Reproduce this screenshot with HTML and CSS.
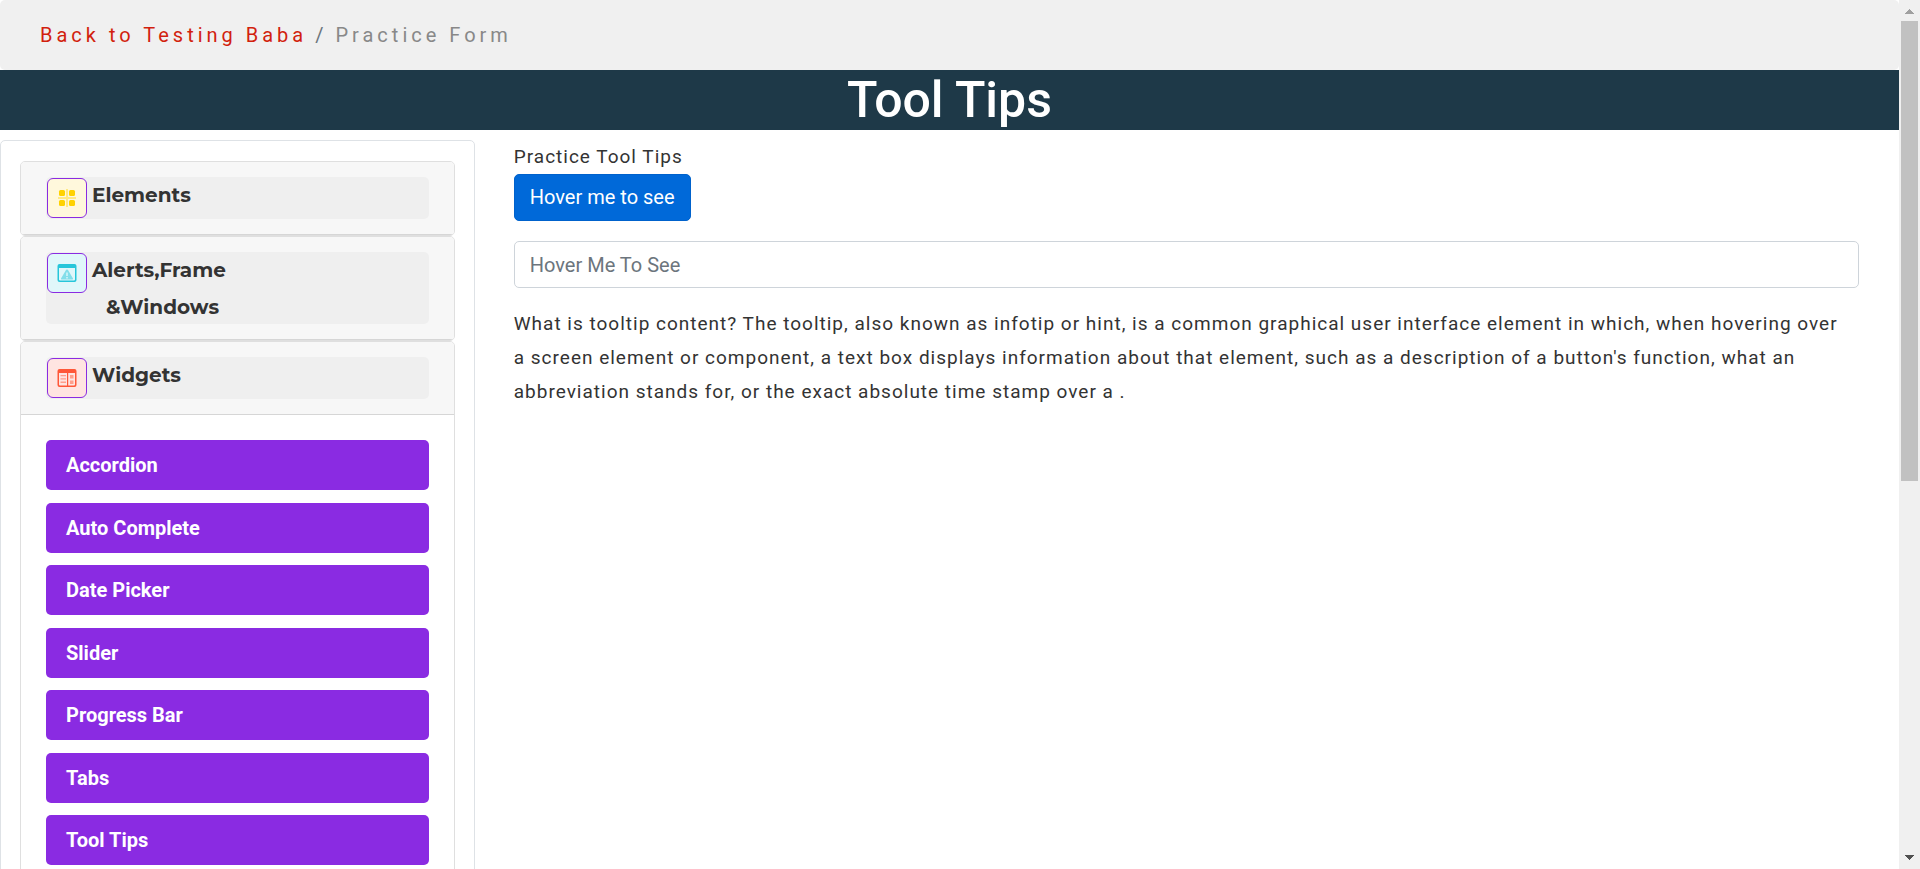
FILE: index.html
```html
<!DOCTYPE html>
<html lang="en">
<head>
<meta charset="utf-8">
<title>Tool Tips</title>
<link rel="stylesheet" href="styles.css">
</head>
<body>
<div class="window">
  <div class="page">
    <nav class="breadcrumb" aria-label="Breadcrumb">
      <a class="breadcrumb-link" href="#">Back to Testing Baba</a>
      <span class="breadcrumb-slash">/</span>
      <span class="breadcrumb-current">Practice Form</span>
    </nav>
    <h1 class="title">Tool Tips</h1>
    <div class="columns">
      <aside class="sidebar">
        <section class="card">
          <div class="card-header">
            <button class="toggle" type="button">
              <svg class="toggle-icon yellow" viewBox="0 0 38 38" aria-hidden="true">
                <path class="soft" d="M18 10h2v18h-2zM10 18h18v2H10z"/>
                <rect x="11" y="11" width="6" height="6" rx="1.5"/><rect x="21" y="11" width="6" height="6" rx="1.5"/>
                <rect x="11" y="21" width="6" height="6" rx="1.5"/><rect x="21" y="21" width="6" height="6" rx="1.5"/>
              </svg>
              <span class="toggle-text">Elements</span>
            </button>
          </div>
        </section>
        <section class="card">
          <div class="card-header">
            <button class="toggle" type="button">
              <svg class="toggle-icon cyan" viewBox="0 0 38 38" aria-hidden="true">
                <path fill-rule="evenodd" d="M11.500 10h15a2 2 0 0 1 2 2v14a2 2 0 0 1-2 2h-15a2 2 0 0 1-2-2V12a2 2 0 0 1 2-2zM11 14v11.500a1 1 0 0 0 1 1h14a1 1 0 0 0 1-1V14z"/>
                <path class="mid" fill-rule="evenodd" d="M19 15.500a1 1 0 0 1 1 .5l5 8.500q.3 1-.7 1H13.700q-1 0-.7-1l5-8.500a1 1 0 0 1 1-.5zM18.300 18.500v3.500h1.400v-3.500zM18.300 23v1.500h1.400V23z"/>
              </svg>
              <span class="toggle-text">Alerts,Frame <span class="toggle-second">&amp;Windows</span></span>
            </button>
          </div>
        </section>
        <section class="card">
          <div class="card-header">
            <button class="toggle" type="button" aria-expanded="true">
              <svg class="toggle-icon red" viewBox="0 0 38 38" aria-hidden="true">
                <path fill-rule="evenodd" d="M11.500 10h15a2 2 0 0 1 2 2v14a2 2 0 0 1-2 2h-15a2 2 0 0 1-2-2V12a2 2 0 0 1 2-2zM11 14v11.500a1 1 0 0 0 1 1h7V14zM20.200 14v12.500H26a1 1 0 0 0 1-1V14z"/>
                <path class="mid" d="M12.500 16H18v1.300h-5.500zM12.500 19.300H18v1.300h-5.500zM12.500 22.600H18v1.300h-5.500zM22 16h3.500v3.500H22zM22 21.500h3.500V25H22z"/>
              </svg>
              <span class="toggle-text">Widgets</span>
            </button>
          </div>
          <ul class="menu">
            <li class="menu-item"><a class="menu-link" href="#">Accordion</a></li>
            <li class="menu-item"><a class="menu-link" href="#">Auto Complete</a></li>
            <li class="menu-item"><a class="menu-link" href="#">Date Picker</a></li>
            <li class="menu-item"><a class="menu-link" href="#">Slider</a></li>
            <li class="menu-item"><a class="menu-link" href="#">Progress Bar</a></li>
            <li class="menu-item"><a class="menu-link" href="#">Tabs</a></li>
            <li class="menu-item"><a class="menu-link" href="#">Tool Tips</a></li>
          </ul>
        </section>
      </aside>
      <main class="content">
        <label class="copy" for="tip-input">Practice Tool Tips</label>
        <button class="primary" type="button">Hover me to see</button>
        <input class="field" id="tip-input" type="text" placeholder="Hover Me To See">
        <p class="copy">What is tooltip content? The tooltip, also known as infotip or hint, is a common graphical user interface element in which, when hovering over a screen element or component, a text box displays information about that element, such as a description of a button's function, what an abbreviation stands for, or the exact absolute time stamp over a .</p>
      </main>
    </div>
  </div>
  <div class="scrollbar" aria-hidden="true">
    <svg class="arrow up" viewBox="0 0 21 21"><path d="M10 9h1v1h1v1h1v1h1v1h1v1H6v-1h1v-1h1v-1h1v-1h1z"/></svg>
    <div class="track"><div class="thumb"></div></div>
    <svg class="arrow down" viewBox="0 0 21 21"><path d="M6 7h9v1h-1v1h-1v1h-1v1h-1v1h-1v-1H9v-1H8V9H7V8H6z"/></svg>
  </div>
</div>
</body>
</html>
```
FILE: styles.css
```css
* { box-sizing: border-box; }

body {
  margin: 0;
  font-family: Roboto, "Liberation Sans", sans-serif;
  font-size: 20px;
  line-height: 30px;
  color: #333;
  background: #fff;
}

button, input { font: inherit; }

.window { display: flex; height: 100vh; }
.page { flex: 1; min-width: 0; overflow: hidden; }

.breadcrumb {
  display: flex;
  gap: 8px;
  padding: 20px 40px;
  border-radius: 5px;
  background: #f0f0f0;
  letter-spacing: 4px;
}
.breadcrumb-link { color: #d21f0e; text-decoration: none; }
.breadcrumb-slash { color: #6c757d; }
.breadcrumb-current { color: #888; }

.title {
  margin: 0 0 10px;
  font-size: 50px;
  font-weight: 500;
  line-height: 60px;
  text-align: center;
  color: #fff;
  background: #1e3948;
}

.columns { display: flex; }

.sidebar {
  flex: 0 0 25%;
  padding: 20px 19px;
  border: 1px solid #dee2e6;
  border-radius: 5px;
}

.card {
  border: 1px solid #dfdfdf;
  border-radius: 5px;
  overflow: hidden;
}
.card-header {
  padding: 15px 25px;
  border-bottom: 1px solid #d6d6d6;
  background: #f7f7f7;
}

.toggle {
  display: flex;
  align-items: flex-start;
  gap: 4px;
  width: 100%;
  padding: 0;
  border: 0;
  border-radius: 5px;
  text-align: left;
  color: #333;
  background: #efefef;
}
.toggle-icon {
  flex: none;
  width: 40px;
  height: 40px;
  margin: 1px;
  border: 1px solid #8a2be2;
  border-radius: 6px;
}
.toggle-text {
  margin-bottom: -2px;
  font-family: Montserrat, Inter, sans-serif;
  font-weight: 700;
  font-size: 20px;
  line-height: 37px;
}
.toggle-second { display: block; padding-left: 14px; }

.yellow { fill: #ffd200; background: #fff8dc; }
.cyan { fill: #26c6da; background: #e0f7fa; }
.red { fill: #ff5738; background: #ffe4e1; }
.soft { opacity: 0.4; }
.mid { opacity: 0.5; }

.menu { margin: 0; padding: 25px; list-style: none; }
.menu-item { margin-bottom: 12px; }
.menu-item:nth-child(odd) { margin-bottom: 13px; }
.menu-link {
  display: block;
  padding: 10px 20px;
  border-radius: 5px;
  font-weight: 700;
  color: #fff;
  background: #8a2be2;
  text-decoration: none;
}

.content {
  display: flex;
  flex: 1;
  flex-direction: column;
  align-items: flex-start;
  min-width: 0;
  padding: 0 40px 0 39px;
}
.copy {
  margin: 0;
  padding-right: 10px;
  font-size: 19px;
  line-height: 34px;
  letter-spacing: 1px;
}
.primary, .field {
  margin-bottom: 20px;
  padding: 8px 15px;
  border-radius: 5px;
  line-height: 29px;
}
.primary {
  border: 1px solid #0062cc;
  color: #fff;
  background: #0069d9;
}
.field {
  width: 100%;
  height: 47px;
  margin-bottom: 19px;
  border: 1px solid #ced4da;
  color: #495057;
}
.field::placeholder { color: #6c757d; opacity: 1; }

.scrollbar {
  display: flex;
  flex: 0 0 21px;
  flex-direction: column;
  background: #f0f0f0;
}
.arrow { width: 21px; height: 21px; }
.up { fill: #a0a0a0; }
.down { fill: #505050; }
.track { flex: 1; padding: 0 2px; }
.thumb { height: 55.6%; background: #c1c1c1; }
```
